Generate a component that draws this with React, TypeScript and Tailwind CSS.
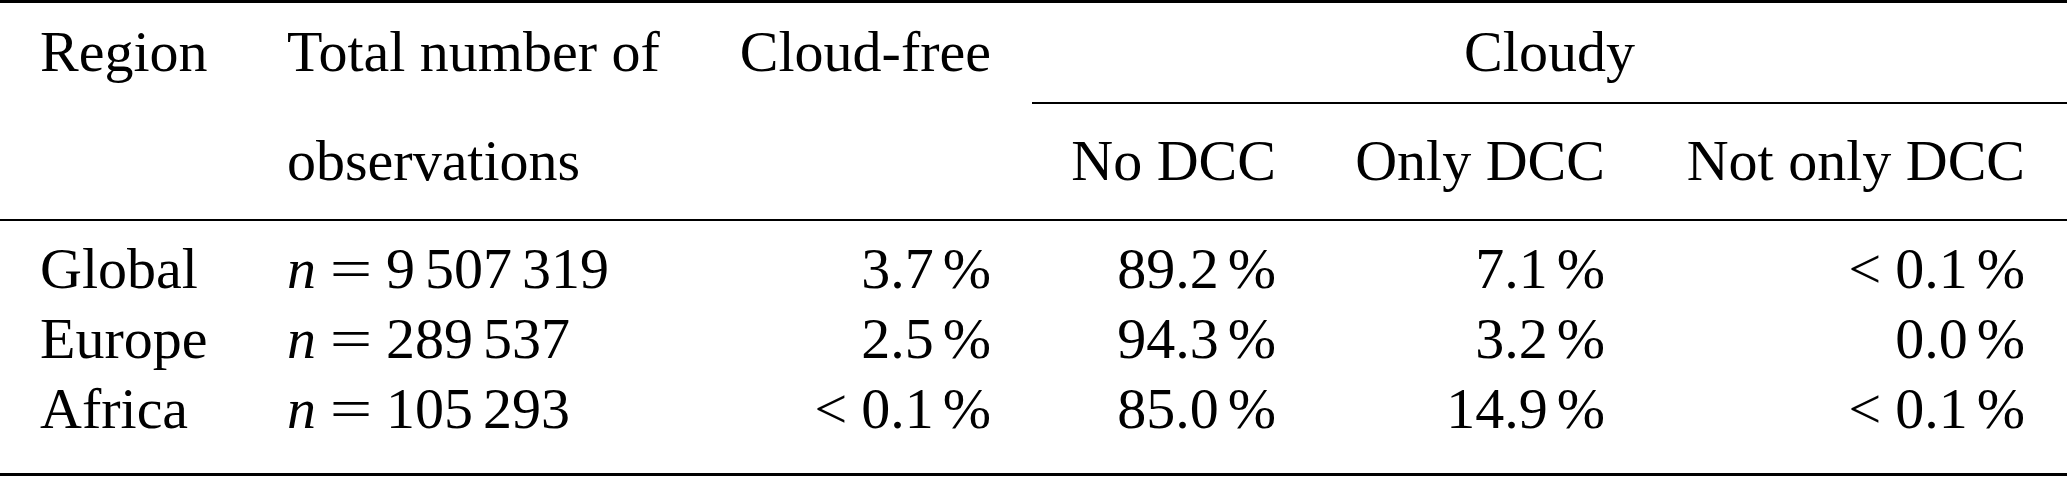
const cols = 'grid grid-cols-[248px_455px_327px_285px_329px_423px]';

type Row = {
  region: string;
  n: string[];
  free: [string, boolean];
  noDcc: [string, boolean];
  onlyDcc: [string, boolean];
  notOnly: [string, boolean];
};

const rows: Row[] = [
  { region: 'Global', n: ['9', '507', '319'], free: ['3.7', false], noDcc: ['89.2', false], onlyDcc: ['7.1', false], notOnly: ['0.1', true] },
  { region: 'Europe', n: ['289', '537'], free: ['2.5', false], noDcc: ['94.3', false], onlyDcc: ['3.2', false], notOnly: ['0.0', false] },
  { region: 'Africa', n: ['105', '293'], free: ['0.1', true], noDcc: ['85.0', false], onlyDcc: ['14.9', false], notOnly: ['0.1', true] },
];

function Pct({ v }: { v: [string, boolean] }) {
  return (
    <>
      {v[1] && <span className="mr-[14px]">&lt;</span>}
      {v[0]}
      <span className="ml-[9px]">%</span>
    </>
  );
}

function Count({ groups }: { groups: string[] }) {
  return (
    <>
      <i>n</i>
      <span className="inline-block w-[42px] mx-[14px] text-center scale-x-[1.3]">=</span>
      {groups.map((g, i) => (
        <span key={i} className={i > 0 ? 'ml-[10px]' : ''}>{g}</span>
      ))}
    </>
  );
}

export default function App() {
  return (
    <div className="w-[2067px] h-[477px] bg-white text-black font-['Liberation_Serif',_'Times_New_Roman',serif] text-[58px] leading-[70px] whitespace-nowrap overflow-hidden">
      {/* toprule */}
      <div className="border-t-[3px] border-black" />

      {/* Header */}
      <div className={`${cols} border-b-2 border-black`}>
        <div className="pl-[40px] pt-[14px]">Region</div>
        <div className="pl-[39px] pt-[14px]">Total number of</div>
        <div className="pr-[39px] pt-[14px] text-right">Cloud-free</div>
        <div className="col-span-3 ml-[2px] pt-[14px] pb-[15px] text-center border-b-2 border-black">Cloudy</div>

        <div />
        <div className="pl-[39px] pt-[22px] pb-[23px]">observations</div>
        <div />
        <div className="pr-[39px] pt-[22px] pb-[23px] text-right">No DCC</div>
        <div className="pr-[39px] pt-[22px] pb-[23px] text-right">Only DCC</div>
        <div className="pr-[42px] pt-[22px] pb-[23px] text-right">Not only DCC</div>
      </div>

      {/* Body */}
      <div className="pt-[13px] pb-[29px] border-b-[3px] border-black">
        {rows.map(r => (
          <div key={r.region} className={cols}>
            <div className="pl-[40px]">{r.region}</div>
            <div className="pl-[39px]"><Count groups={r.n} /></div>
            <div className="pr-[39px] text-right"><Pct v={r.free} /></div>
            <div className="pr-[39px] text-right"><Pct v={r.noDcc} /></div>
            <div className="pr-[39px] text-right"><Pct v={r.onlyDcc} /></div>
            <div className="pr-[42px] text-right"><Pct v={r.notOnly} /></div>
          </div>
        ))}
      </div>
    </div>
  );
}
